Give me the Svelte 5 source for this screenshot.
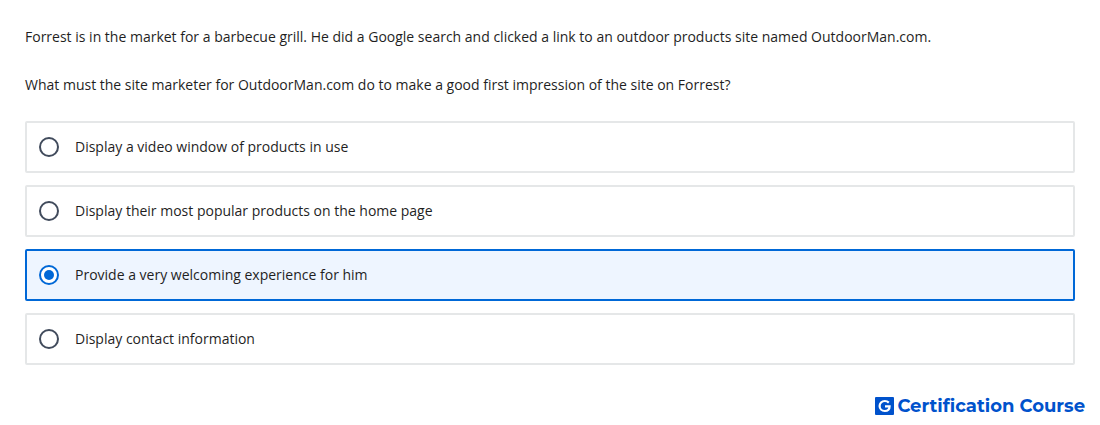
<script>
  let selected = 2;

  const paragraphs = [
    'Forrest is in the market for a barbecue grill. He did a Google search and clicked a link to an outdoor products site named OutdoorMan.com.',
    'What must the site marketer for OutdoorMan.com do to make a good first impression of the site on Forrest?'
  ];
  const options = [
    'Display a video window of products in use',
    'Display their most popular products on the home page',
    'Provide a very welcoming experience for him',
    'Display contact information'
  ];
</script>

<main class="question">
  <div class="question-text" id="question-text">
    {#each paragraphs as paragraph}
      <p>{paragraph}</p>
    {/each}
  </div>

  <div class="options" role="radiogroup" aria-labelledby="question-text">
    {#each options as option, index}
      <label class="option" class:selected={selected === index}>
        <input type="radio" name="answer" value={index} bind:group={selected} />
        <span>{option}</span>
      </label>
    {/each}
  </div>

  <footer class="brand">
    <svg class="logo" viewBox="0 0 19 18" aria-hidden="true">
      <rect width="19" height="18" rx="1" fill="#0052cc" />
      <path d="M13.8 5.6C12.7 4.5 11.3 4 9.8 4C6.7 4 4.6 6.2 4.6 9S6.7 14 9.8 14C12.8 14 14.6 12 14.6 9.3H10" fill="none" stroke="#fff" stroke-width="2.2" />
    </svg>
    <span>Certification Course</span>
  </footer>
</main>

<style>
  :global(body) {
    margin: 0;
    background: #fff;
  }

  .question {
    padding: 25px 25px 7px;
    color: #1f1f1f;
    font-family: 'Open Sans', sans-serif;
    font-size: 14px;
    line-height: 24px;
  }

  .question-text p {
    margin: 0 0 24px;
  }

  .options {
    display: flex;
    flex-direction: column;
    gap: 12px;
  }

  .option {
    display: flex;
    align-items: center;
    gap: 16px;
    padding: 12px;
    border: 2px solid #e5e7e8;
    border-radius: 2px;
    cursor: pointer;
  }

  .option.selected {
    border-color: #0068d7;
    background: #eef5ff;
  }

  .option input {
    appearance: none;
    display: grid;
    place-items: center;
    box-sizing: border-box;
    flex: none;
    width: 20px;
    height: 20px;
    margin: 0;
    border: 2px solid #414b5c;
    border-radius: 50%;
    background: #fff;
    cursor: pointer;
  }

  .option input:checked {
    border-color: #0068d7;
  }

  .option input:checked::before {
    content: '';
    width: 10px;
    height: 10px;
    border-radius: 50%;
    background: #0068d7;
  }

  .brand {
    display: flex;
    align-items: center;
    justify-content: flex-end;
    gap: 3px;
    margin: 29px -10px 0 0;
    color: #0052cc;
    font-family: Montserrat, Inter, sans-serif;
    font-size: 18px;
    font-weight: 700;
  }

  .logo {
    width: 19px;
    height: 18px;
  }
</style>
